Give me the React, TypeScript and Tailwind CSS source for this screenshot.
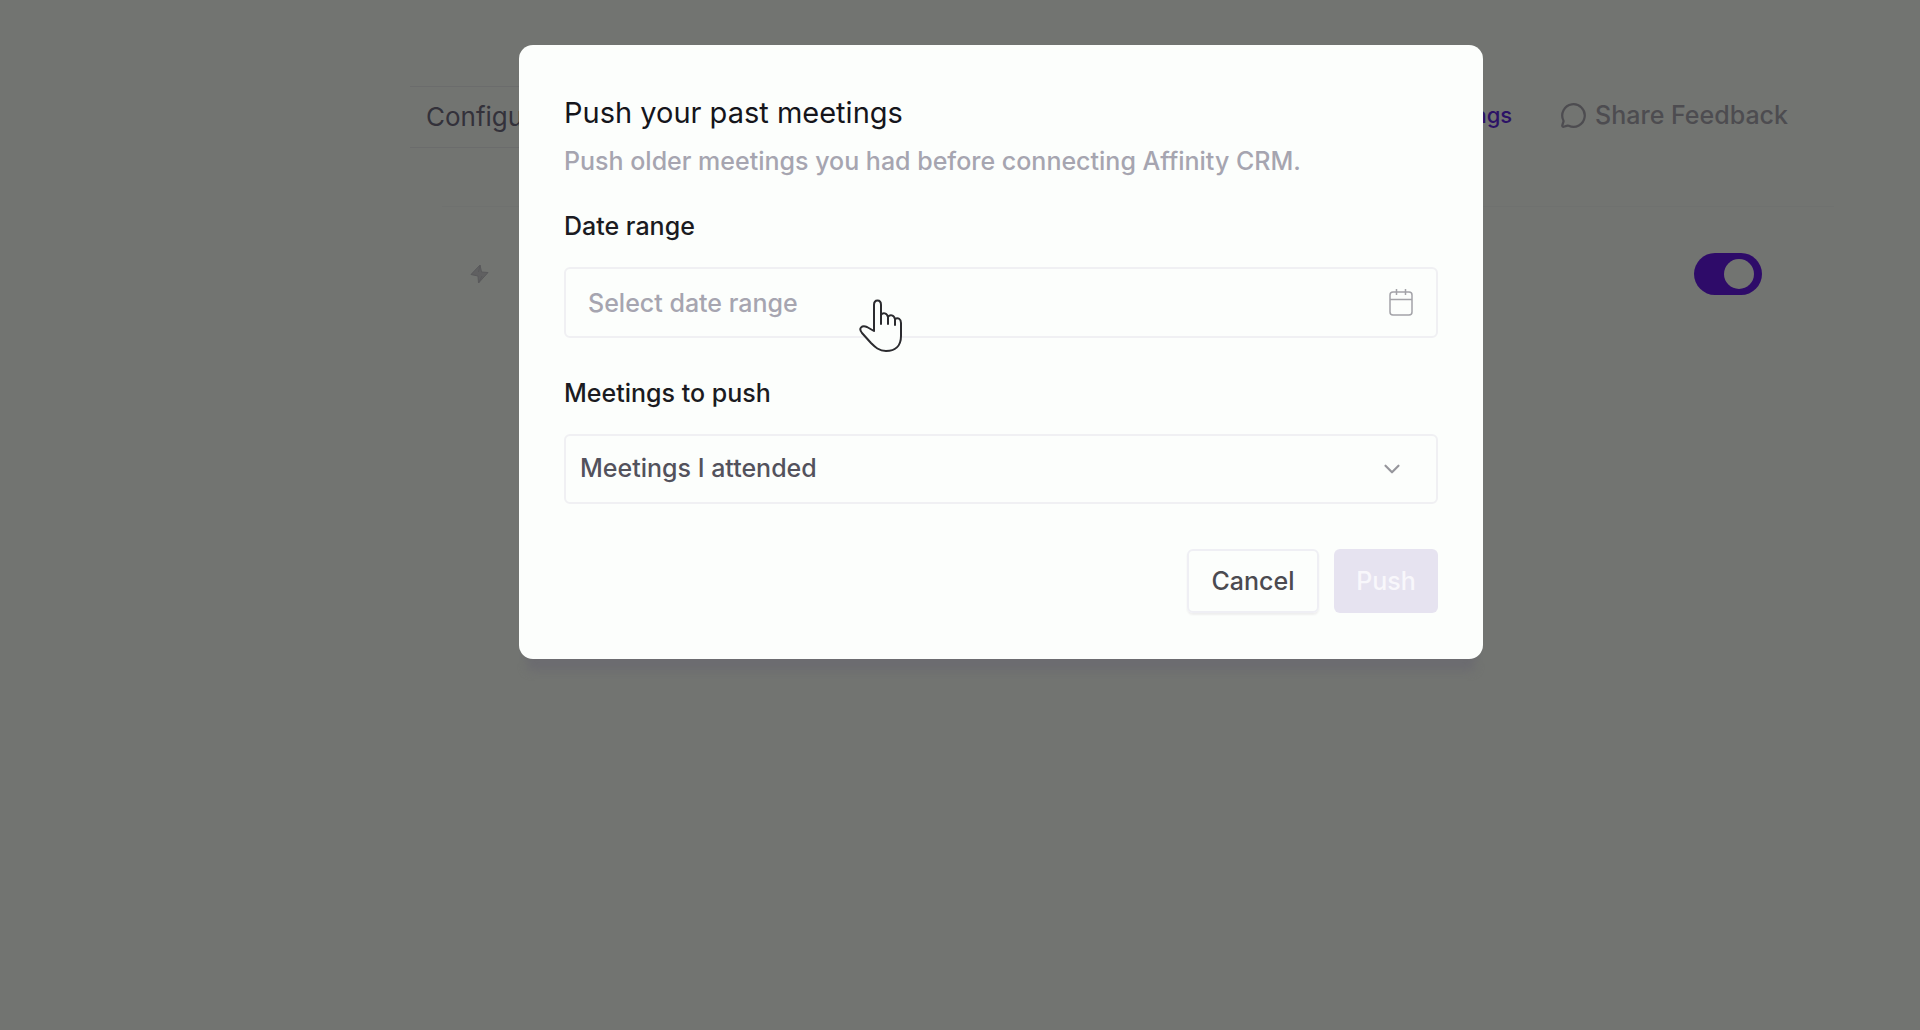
import { useState } from 'react'
import { ChevronDown, MessageCircle } from 'lucide-react'

const BoltIcon = () => {
  return (
    <svg width="20" height="22" viewBox="0 0 20 22" className="text-[#59595b]" aria-hidden="true">
      <path
        d="M10 2L1 11.5L8 13L8.5 20L18 9.5L11.5 9Z"
        fill="currentColor"
        fillOpacity="0.7"
        stroke="currentColor"
        strokeLinejoin="round"
      />
      <path d="M10 2L8.5 9M8.5 20L12 13" fill="none" stroke="currentColor" />
    </svg>
  )
}

const CalendarIcon = () => {
  return (
    <svg
      width="24"
      height="28"
      viewBox="0 0 24 28"
      fill="none"
      stroke="currentColor"
      strokeWidth="1.5"
      className="text-[#a3a3a8]"
      aria-hidden="true"
    >
      <rect x="1" y="3" width="22" height="23" rx="3" />
      <path d="M1 10.5H23M7.5 0V6M16.5 0V6" />
    </svg>
  )
}

const Header = () => {
  return (
    <header className="flex items-center justify-between pr-[46px]">
      <h1 className="w-1/2 pl-4 text-[26px] leading-[60px] text-[#33313a] border-y border-[#6b6c6c]">
        Configure
      </h1>
      <nav className="flex items-center gap-12 pb-1">
        <a href="#meetings" className="text-[22px] leading-8 font-medium text-[#2c1266]">
          Push past meetings
        </a>
        <a
          href="#feedback"
          className="flex items-center gap-2 text-[25px] leading-8 font-medium text-[#4d4c50]"
        >
          <MessageCircle size={27} strokeWidth={2} />
          Share Feedback
        </a>
      </nav>
    </header>
  )
}

const SettingRow = () => {
  const [enabled, setEnabled] = useState(true)

  return (
    <section className="flex items-center justify-between mt-[58px] ml-8 pl-7 pr-[72px] pt-[46px] border-t border-[#6f716f]">
      <BoltIcon />
      <input
        type="checkbox"
        role="switch"
        aria-label="Push meetings automatically"
        checked={enabled}
        onChange={(e) => setEnabled(e.target.checked)}
        className="appearance-none flex items-center w-[68px] h-[42px] px-2 rounded-full bg-[#5b5b60] checked:bg-[#2e0b69] checked:justify-end before:content-[''] before:size-[30px] before:rounded-full before:bg-[#727471]"
      />
    </section>
  )
}

const HandCursor = () => {
  return (
    <svg
      className="absolute left-[340px] top-[253px] w-[44px] h-[56px] pointer-events-none"
      viewBox="0 0 44 56"
      fill="#fcfefc"
      stroke="#2b2b2f"
      strokeWidth="2"
      strokeLinejoin="round"
      strokeLinecap="round"
      aria-hidden="true"
    >
      <path d="M15 33V7C15 1 22 1 22 7V17C24 14 28 15 29 19C31 16 35 17 36 21C39 19 42 21 42 25V38C42 48 36 53 27 53C20 53 16 49 12 45L3 35C-1 30 3 27 8 29Z" />
      <path d="M22 17V26M29 19V26M36 21V27" />
    </svg>
  )
}

const PushModal = () => {
  return (
    <div className="absolute inset-0 flex justify-center items-start pt-[45px] pl-[82px]">
      <form
        role="dialog"
        aria-labelledby="modal-title"
        onSubmit={(e) => e.preventDefault()}
        className="relative w-full max-w-[964px] px-[45px] pt-[50px] pb-[46px] rounded-[14px] bg-[#fcfefc] shadow-[0_20px_8px_-8px_#6c6c70]"
      >
        <h2 id="modal-title" className="text-[29px] leading-9 text-[#15151b]">
          Push your past meetings
        </h2>
        <p className="mt-[14px] text-[25px] leading-8 font-medium text-[#a6a5b0]">
          Push older meetings you had before connecting Affinity CRM.
        </p>

        <label htmlFor="range" className="block mt-[33px] text-[25px] leading-8 font-medium text-[#1b1b21]">
          Date range
        </label>
        <div className="flex items-center h-[71px] mt-[25px] pl-[22px] pr-[23px] rounded-md border-2 border-[#f0f0f3]">
          <input
            id="range"
            type="text"
            placeholder="Select date range"
            className="flex-1 min-w-0 text-[25px] leading-8 font-medium outline-none placeholder:text-[#a6a5b0]"
          />
          <CalendarIcon />
        </div>

        <label htmlFor="meetings" className="block mt-[39px] text-[25px] leading-8 font-medium text-[#1b1b21]">
          Meetings to push
        </label>
        <div className="grid items-center mt-[25px]">
          <select
            id="meetings"
            className="col-start-1 row-start-1 appearance-none w-full h-[70px] px-[14px] rounded-md border-2 border-[#f0f0f3] text-[25px] font-medium text-[#53525c] outline-none"
          >
            <option>Meetings I attended</option>
            <option>All meetings</option>
          </select>
          <ChevronDown
            size={26}
            strokeWidth={2}
            className="col-start-1 row-start-1 justify-self-end mr-[33px] text-[#96969c] pointer-events-none"
          />
        </div>

        <div className="flex justify-end gap-[15px] mt-[45px] text-[25px] leading-8 font-medium">
          <button
            type="button"
            className="w-[132px] h-16 rounded-md border-2 border-[#efeff4] text-[#4b4a50] shadow-[0_2px_2px_#efefef]"
          >
            Cancel
          </button>
          <button type="submit" disabled className="w-[104px] h-16 rounded-md bg-[#e6e3f0] text-[#f8f7fb]">
            Push
          </button>
        </div>

        <HandCursor />
      </form>
    </div>
  )
}

const App = () => {
  return (
    <div className="relative min-h-screen bg-[#727471] font-[Inter,sans-serif]">
      <main className="pt-[86px] pl-[410px] pr-[86px]">
        <Header />
        <SettingRow />
      </main>
      <PushModal />
    </div>
  )
}

export default App
